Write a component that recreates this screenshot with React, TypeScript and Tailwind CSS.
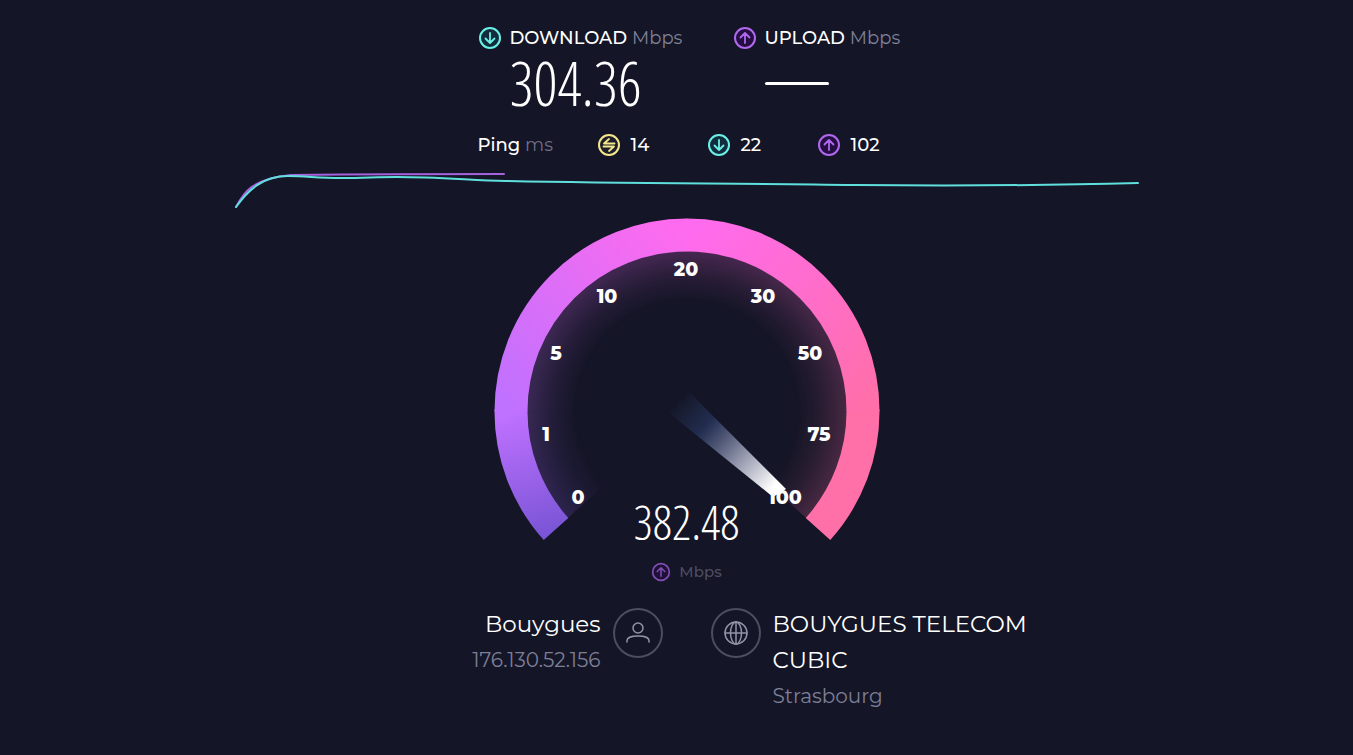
import React from 'react';

type Tone = 'cyan' | 'purple' | 'yellow';

const tones: Record<Tone, { stroke: string; fill: string }> = {
  cyan: { stroke: '#6af0e6', fill: '#122c3d' },
  purple: { stroke: '#b068ee', fill: '#250f42' },
  yellow: { stroke: '#f3e88a', fill: '#1d1d2b' }
};

const iconPaths = {
  down: 'M12 7v10M7.5 12.5L12 17l4.5-4.5',
  up: 'M12 17V7M7.5 11.5L12 7l4.5 4.5',
  swap: 'M17.5 10.5H7L12 6M6.5 13.5H17L12 18'
};

const pings: { icon: keyof typeof iconPaths; tone: Tone; label: string; value: string }[] = [
  { icon: 'swap', tone: 'yellow', label: 'Idle latency', value: '14' },
  { icon: 'down', tone: 'cyan', label: 'Download latency', value: '22' },
  { icon: 'up', tone: 'purple', label: 'Upload latency', value: '102' }
];

const marks = [
  { value: '0', x: 91, y: 295 },
  { value: '1', x: 59, y: 232 },
  { value: '5', x: 69, y: 151 },
  { value: '10', x: 120, y: 94 },
  { value: '20', x: 199, y: 67 },
  { value: '30', x: 276, y: 94 },
  { value: '50', x: 323, y: 151 },
  { value: '75', x: 332, y: 232 },
  { value: '100', x: 298, y: 295 }
];

const CircleIcon = ({ icon, tone, className = 'size-6' }: { icon: keyof typeof iconPaths; tone: Tone; className?: string }) => (
  <svg viewBox="0 0 24 24" className={`shrink-0 ${className}`} aria-hidden="true">
    <circle cx="12" cy="12" r="10" fill={tones[tone].fill} stroke={tones[tone].stroke} strokeWidth="2" />
    <path d={iconPaths[icon]} fill="none" stroke={tones[tone].stroke} strokeWidth="1.8" strokeLinecap="round" strokeLinejoin="round" />
  </svg>
);

const SpeedHeading = ({ icon, tone, title }: { icon: 'down' | 'up'; tone: Tone; title: string }) => (
  <h2 className="flex items-center gap-2 text-lg leading-6 font-medium whitespace-nowrap">
    <CircleIcon icon={icon} tone={tone} />
    <span>
      {title} <span className="font-normal text-[#7f8198]">Mbps</span>
    </span>
  </h2>
);

const SpeedGraph = () => (
  <svg viewBox="0 0 904 37" className="w-full max-w-[904px]" fill="none" strokeWidth="2" strokeLinecap="round" aria-hidden="true">
    <path d="M1 36C9 21 17 8 56 4Q160 3 269 3" stroke="#a562dd" />
    <path d="M1 36C13 19 28 5 53 5C72 5 82 7 106 7C130 7 140 6 162 6C200 6 235 9 270 10C400 13 500 12 620 14C720 15 790 15 903 12" stroke="#5fe0dc" />
  </svg>
);

// one entry per quarter of the dial, so the colour can travel round the ring
const arcs = [
  { d: 'M69 327A176 176 0 0 1 24 208', glow: 'M91 307A147 147 0 0 1 53 209', paint: 'url(#arcStart)' },
  { d: 'M24 209A176 176 0 0 1 200 33', glow: 'M53 209A147 147 0 0 1 200 62', paint: 'url(#arcLeft)' },
  { d: 'M199.5 33A176 176 0 0 1 376 209', glow: 'M200 62A147 147 0 0 1 347 209', paint: 'url(#arcRight)' },
  { d: 'M376 208A176 176 0 0 1 331 327', glow: 'M347 209A147 147 0 0 1 309 307', paint: '#ff6fa8' }
];

const Gauge = () => (
  <div className="relative w-full max-w-[400px]">
    <svg viewBox="0 6 400 338" className="w-full" role="img" aria-label="Speed gauge">
      <defs>
        <linearGradient id="arcStart" gradientUnits="userSpaceOnUse" x1="70" y1="338" x2="32" y2="210">
          <stop offset="0" stopColor="#7553d3" />
          <stop offset="1" stopColor="#bf71ff" />
        </linearGradient>
        <linearGradient id="arcLeft" gradientUnits="userSpaceOnUse" x1="24" y1="209" x2="200" y2="33">
          <stop offset="0" stopColor="#bf71ff" />
          <stop offset="1" stopColor="#ff6bee" />
        </linearGradient>
        <linearGradient id="arcRight" gradientUnits="userSpaceOnUse" x1="200" y1="33" x2="376" y2="209">
          <stop offset="0" stopColor="#ff6bee" />
          <stop offset="1" stopColor="#ff6fa8" />
        </linearGradient>
        <radialGradient id="glowFade" gradientUnits="userSpaceOnUse" cx="200" cy="209" r="160">
          <stop offset="0.68" stopColor="#fff" stopOpacity="0" />
          <stop offset="0.84" stopColor="#fff" stopOpacity="0.09" />
          <stop offset="1" stopColor="#fff" stopOpacity="0.22" />
        </radialGradient>
        <mask id="glowMask" maskUnits="userSpaceOnUse" x="0" y="0" width="400" height="344">
          <path d="M200 209L80 317L0 340V0H400V340L320 317Z" fill="url(#glowFade)" />
        </mask>
        <linearGradient id="needle" gradientUnits="userSpaceOnUse" x1="187" y1="196" x2="292" y2="289">
          <stop offset="0" stopColor="#22304f" stopOpacity="0" />
          <stop offset="0.3" stopColor="#25335a" stopOpacity="0.8" />
          <stop offset="0.6" stopColor="#8488a0" />
          <stop offset="0.95" stopColor="#fff" />
        </linearGradient>
      </defs>
      <g fill="none" strokeWidth="80" mask="url(#glowMask)">
        {arcs.map((arc) => (
          <path key={arc.d} d={arc.glow} stroke={arc.paint} />
        ))}
      </g>
      <g fill="none" strokeWidth="33">
        {arcs.map((arc) => (
          <path key={arc.d} d={arc.d} stroke={arc.paint} />
        ))}
      </g>
      <path d="M182 211L203 191L299 287L286 295Z" fill="url(#needle)" />
      <g className="fill-white text-[19px] font-extrabold" textAnchor="middle">
        {marks.map((mark) => (
          <text key={mark.value} x={mark.x} y={mark.y + 7}>
            {mark.value}
          </text>
        ))}
      </g>
    </svg>
    <p className="absolute inset-x-0 bottom-0 text-center font-['Open_Sans_Condensed_Light','Open_Sans_Condensed','Roboto_Condensed',sans-serif] text-5xl leading-12 font-light">
      382.48
    </p>
  </div>
);

const Badge = ({ children }: { children: React.ReactNode }) => (
  <span className="flex size-[50px] shrink-0 items-center justify-center rounded-full border-2 border-[#4c4d60]">
    <svg viewBox="0 0 26 26" className="size-[26px]" fill="none" stroke="#9193a8" strokeWidth="1.5" strokeLinecap="round" aria-hidden="true">
      {children}
    </svg>
  </span>
);

export default function App() {
  return (
    <main className="flex min-h-screen flex-col items-center bg-[#141526] pt-[26px] pb-8 pl-5 font-['Montserrat','Inter',sans-serif] text-white">
      <section className="w-[418px] max-w-full">
        <div className="flex">
          <div className="w-[255px] shrink-0">
            <SpeedHeading icon="down" tone="cyan" title="DOWNLOAD" />
            <p className="pl-8 font-['Open_Sans_Condensed_Light','Open_Sans_Condensed','Roboto_Condensed',sans-serif] text-6xl leading-[66px] font-light">
              304.36
            </p>
          </div>
          <div>
            <SpeedHeading icon="up" tone="purple" title="UPLOAD" />
            <div className="mt-8 ml-8 h-[3px] w-16 rounded-full bg-white"></div>
          </div>
        </div>

        <dl className="mt-[17px] flex items-center text-lg leading-6 font-medium">
          <dt className="w-[119px] shrink-0">
            Ping <span className="font-normal text-[#6d6f88]">ms</span>
          </dt>
          {pings.map((ping) => (
            <dd key={ping.label} title={ping.label} className="flex w-[110px] shrink-0 items-center gap-2.5">
              <CircleIcon icon={ping.icon} tone={ping.tone} />
              {ping.value}
            </dd>
          ))}
        </dl>
      </section>

      <div className="mt-3.5 flex w-full justify-center">
        <SpeedGraph />
      </div>

      <Gauge />

      <p className="mt-3.5 flex items-center gap-2 text-[15px] leading-6 font-medium text-[#4d4e62]">
        <CircleIcon icon="up" tone="purple" className="size-5 opacity-70" />
        Mbps
      </p>

      <section className="mt-6 grid w-full grid-cols-2 gap-12">
        <div className="flex justify-end gap-3 text-right">
          <div className="-mt-0.5">
            <h3 className="text-[23px] leading-9">Bouygues</h3>
            <p className="text-xl leading-9 text-[#7d7f97]">176.130.52.156</p>
          </div>
          <Badge>
            <circle cx="13" cy="8" r="5" />
            <path d="M2 22v-1.5C2 18 6 16 13 16s11 2 11 4.5V22" />
          </Badge>
        </div>
        <div className="flex gap-3">
          <Badge>
            <circle cx="13" cy="13" r="11" />
            <ellipse cx="13" cy="13" rx="5.5" ry="11" />
            <path d="M13 2v22M2 13h22" />
          </Badge>
          <div className="-mt-0.5 w-[260px]">
            <h3 className="text-[23px] leading-9">BOUYGUES TELECOM CUBIC</h3>
            <p className="text-xl leading-9 text-[#7d7f97]">Strasbourg</p>
          </div>
        </div>
      </section>
    </main>
  );
}
